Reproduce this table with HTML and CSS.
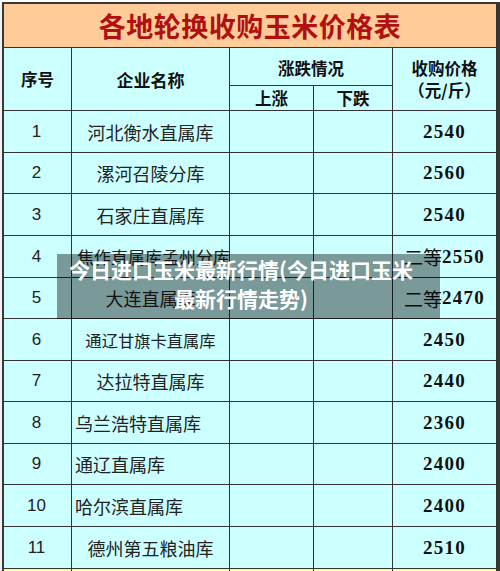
FILE: index.html
```html
<!DOCTYPE html>
<html lang="zh-CN">
<head>
<meta charset="utf-8">
<title>各地轮换收购玉米价格表</title>
<link rel="stylesheet" href="styles.css">
</head>
<body>
<div class="page">
  <div class="sheet">
    <div class="cell title">各地轮换收购玉米价格表</div>

    <div class="cell head h-no">序号</div>
    <div class="cell head h-name">企业名称</div>
    <div class="cell head h-chg">涨跌情况</div>
    <div class="cell head h-price">收购价格<br>（元/斤）</div>
    <div class="cell head h-up">上涨</div>
    <div class="cell head h-down">下跌</div>

    <div class="cell no">1</div><div class="cell name">河北衡水直属库</div><div class="cell"></div><div class="cell"></div><div class="cell price">2540</div>
    <div class="cell no">2</div><div class="cell name">漯河召陵分库</div><div class="cell"></div><div class="cell"></div><div class="cell price">2560</div>
    <div class="cell no">3</div><div class="cell name">石家庄直属库</div><div class="cell"></div><div class="cell"></div><div class="cell price">2540</div>
    <div class="cell no">4</div><div class="cell name left long">焦作直属库孟州分库</div><div class="cell"></div><div class="cell"></div><div class="cell price"><span class="grade">二等</span>2550</div>
    <div class="cell no">5</div><div class="cell name">大连直属库</div><div class="cell"></div><div class="cell"></div><div class="cell price"><span class="grade">二等</span>2470</div>
    <div class="cell no">6</div><div class="cell name small">通辽甘旗卡直属库</div><div class="cell"></div><div class="cell"></div><div class="cell price">2450</div>
    <div class="cell no">7</div><div class="cell name">达拉特直属库</div><div class="cell"></div><div class="cell"></div><div class="cell price">2440</div>
    <div class="cell no">8</div><div class="cell name left">乌兰浩特直属库</div><div class="cell"></div><div class="cell"></div><div class="cell price">2360</div>
    <div class="cell no">9</div><div class="cell name left">通辽直属库</div><div class="cell"></div><div class="cell"></div><div class="cell price">2400</div>
    <div class="cell no">10</div><div class="cell name left">哈尔滨直属库</div><div class="cell"></div><div class="cell"></div><div class="cell price">2400</div>
    <div class="cell no">11</div><div class="cell name">德州第五粮油库</div><div class="cell"></div><div class="cell"></div><div class="cell price">2510</div>

    <div class="cell foot"></div><div class="cell foot"></div><div class="cell foot"></div><div class="cell foot"></div><div class="cell foot"></div>
  </div>

  <div class="caption"><div class="caption-text">今日进口玉米最新行情(今日进口玉米最新行情走势)</div></div>
</div>
</body>
</html>
```

FILE: styles.css
```css
html, body {
  margin: 0;
  padding: 0;
}
body {
  background: #f2f2f2;
  width: 500px;
  height: 571px;
  overflow: hidden;
  font-family: "Noto Sans CJK SC", "Liberation Sans", sans-serif;
}
.page {
  position: relative;
  width: 500px;
  height: 571px;
  overflow: hidden;
  border-top: 2px solid #ffffff;
  box-sizing: border-box;
}
.sheet {
  margin-left: 2px;
  width: 494px;
  display: grid;
  grid-template-columns: 67px 157px 83px 78px 103px;
  grid-template-rows: 43px 37px 24px 41px 40px 41px 41px 40px 41px 40px 41px 40px 41px 41px 30px;
  gap: 1px;
  background: #333333;
  border: 2px solid #383838;
  border-bottom: none;
}
.cell {
  background: #ccffff;
  display: flex;
  align-items: center;
  justify-content: center;
  color: #1a1a1a;
  white-space: nowrap;
  overflow: visible;
}
.title {
  grid-column: 1 / 6;
  background: #ffcc99;
  color: #b01010;
  font-weight: 700;
  font-size: 27px;
  letter-spacing: 0.5px;
}
.head {
  font-weight: 700;
  font-size: 16.5px;
  color: #111;
}
.h-no { grid-column: 1; grid-row: 2 / 4; }
.h-name { grid-column: 2; grid-row: 2 / 4; font-size: 17px; }
.h-chg { grid-column: 3 / 5; grid-row: 2; padding-top: 2px; }
.h-price {
  grid-column: 5;
  grid-row: 2 / 4;
  text-align: center;
  line-height: 22px;
  padding-top: 0;
}
.h-up { grid-column: 3; grid-row: 3; }
.h-down { grid-column: 4; grid-row: 3; }

.no {
  font-family: "Liberation Sans", sans-serif;
  font-size: 17px;
  color: #222;
  padding-right: 2px;
}
.name {
  font-size: 18px;
  color: #222;
}
.name.left {
  justify-content: flex-start;
  padding-left: 3px;
}
.name.long {
  font-size: 17px;
  padding-left: 5px;
  overflow: hidden;
}
.name.small {
  font-size: 16.3px;
}
.price {
  font-family: "Liberation Serif", serif;
  font-weight: 700;
  font-size: 19px;
  letter-spacing: 1.2px;
  color: #111;
}
.grade {
  font-family: "Noto Sans CJK SC", sans-serif;
  font-weight: 400;
  font-size: 19px;
  letter-spacing: 0;
}
.foot {
  background: #ffff99;
}

.caption {
  position: absolute;
  left: 57px;
  top: 252px;
  width: 383px;
  height: 65px;
  background: rgba(0, 0, 0, 0.4);
  box-sizing: border-box;
  padding-top: 1px;
}
.caption-text {
  width: 352px;
  margin-left: 8px;
  text-align: center;
  color: #ffffff;
  font-weight: 700;
  font-size: 21px;
  line-height: 29px;
  white-space: normal;
}
```
